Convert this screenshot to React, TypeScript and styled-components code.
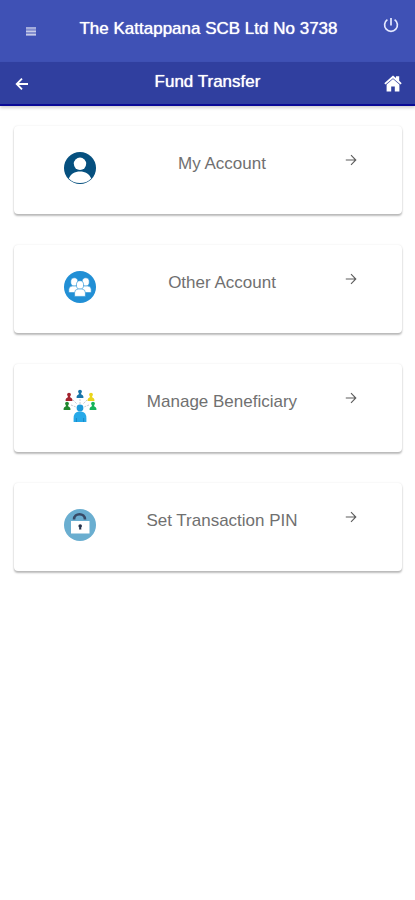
import React from "react";
import styled, { createGlobalStyle } from "styled-components";

const GlobalStyle = createGlobalStyle`
  * { box-sizing: border-box; }
  body {
    margin: 0;
    background: #fff;
    font-family: "Liberation Sans", Arial, Helvetica, sans-serif;
  }
`;

const Page = styled.div`
  min-height: 100vh;
`;

const Bar = styled.div`
  display: grid;
  grid-template-columns: 44px 1fr 44px;
  justify-items: center;
  color: #fff;
`;

const TopBar = styled(Bar)`
  height: 62px;
  padding: 0 2px 0 8px;
  grid-template-columns: 46px 1fr 50px;
  background: #3f51b5;
`;

const SubBar = styled(Bar)`
  height: 44px;
  background: #303f9f;
  border-bottom: 2px solid #0a0a96;
  box-shadow: 0 2px 3px rgba(0, 0, 0, 0.18);
`;

const Title = styled.h1`
  margin: 0;
  padding-top: 19px;
  font-size: 17px;
  line-height: 20px;
  font-weight: 400;
  white-space: nowrap;
  text-shadow: 0 0 1px #fff;
`;

const SubTitle = styled(Title).attrs({ as: "h2" })`
  padding-top: 10px;
`;

const IconButton = styled.button<{ $top: number; $end?: boolean }>`
  display: flex;
  align-self: start;
  justify-self: ${(p) => (p.$end ? "end" : "center")};
  margin: 0;
  padding: ${(p) => p.$top}px ${(p) => (p.$end ? 14 : 4)}px 4px 4px;
  border: 0;
  background: none;
  color: inherit;
  cursor: pointer;
`;

const CardList = styled.main`
  display: flex;
  flex-direction: column;
  gap: 31px;
  padding: 20px 13px 20px 14px;
`;

const Card = styled.button`
  display: grid;
  grid-template-columns: 33fr 38fr 26fr;
  justify-items: center;
  align-items: start;
  width: 100%;
  height: 88px;
  padding: 25px 0 0;
  border: 0;
  border-radius: 4px;
  background: #fff;
  color: #707070;
  font: inherit;
  cursor: pointer;
  box-shadow: 0 2px 2px rgba(0, 0, 0, 0.26), 0 0 2px rgba(0, 0, 0, 0.1);
`;

const CardLabel = styled.span`
  padding-top: 3px;
  font-size: 17px;
  line-height: 20px;
  white-space: nowrap;
`;

const ArrowSlot = styled.span`
  display: flex;
  padding: 3px 0 0 2px;
`;

const MenuIcon = () => (
  <svg width="12" height="12" viewBox="0 0 12 12" aria-hidden="true">
    <path d="M1 2h10v9H1z" fill="#fff" opacity=".35" />
    <path d="M1 3h10M1 6.3h10M1 9.6h10" stroke="#fff" strokeWidth="1.2" opacity=".55" />
  </svg>
);

const PowerIcon = () => (
  <svg width="16" height="16" viewBox="0 0 16 16" fill="none" stroke="#e4e8ff" strokeWidth="1.7" aria-hidden="true">
    <path d="M8 1v7.5M4.4 2.6a6.4 6.4 0 1 0 7.2 0" />
  </svg>
);

const ArrowLeft = () => (
  <svg width="14" height="14" viewBox="0 0 14 14" fill="none" stroke="#fff" strokeWidth="1.8" aria-hidden="true">
    <path d="M13 7H2M7 1.6 1.7 7 7 12.4" />
  </svg>
);

const ArrowRight = () => (
  <svg width="12" height="12" viewBox="0 0 12 12" fill="none" stroke="#5c5c5c" strokeWidth="1.1" aria-hidden="true">
    <path d="M.8 6h10M6 1.2 10.8 6 6 10.8" />
  </svg>
);

const HomeIcon = () => (
  <svg width="18" height="17" viewBox="0 0 18 17" fill="#fff" aria-hidden="true">
    <path d="M9 .4 12 3V1.200H15.200v4.600l2.500 2.500-1.200 1.300L9 3.200 1.500 9.600.3 8.300z" />
    <path d="m9 3.900 6.400 5.500v7h-4.600v-4.800H7.200v4.800H2.600v-7z" />
  </svg>
);

const AccountIcon = () => (
  <svg width="34" height="34" viewBox="0 0 34 34" aria-hidden="true">
    <circle cx="17" cy="17" r="16" fill="#06507f" />
    <circle cx="17" cy="12.800" r="6.200" fill="#fff" />
    <path d="M5.800 27.400C7.600 22.800 11.800 20.400 17 20.400s9.400 2.400 11.200 7C25.400 30.400 21.600 32 17 32S8.600 30.400 5.800 27.400z" fill="#fff" />
  </svg>
);

const GroupIcon = () => (
  <svg width="34" height="34" viewBox="0 0 34 34" aria-hidden="true">
    <circle cx="17" cy="17" r="16" fill="#218fd5" />
    <g fill="#fff" stroke="#218fd5" strokeWidth=".6">
      <ellipse cx="11.300" cy="12" rx="3.600" ry="4.200" />
      <ellipse cx="22.700" cy="12" rx="3.600" ry="4.200" />
      <path d="M5.800 22.600v-3.200q0-3 3.400-3.400h4.400q3 .4 3 3.400v3.200z" />
      <path d="M17.400 22.600v-3.200q0-3 3-3.400h4.400q3.400.4 3.400 3.400v3.200z" />
      <ellipse cx="17" cy="15" rx="3.600" ry="4.300" />
      <path d="M11.600 26.400v-3.600q0-3.400 3.400-3.800h4q3.400.4 3.400 3.800v3.600z" />
    </g>
  </svg>
);

const contacts = [
  { x: 4, y: 18, color: "#23882f" },
  { x: 6, y: 9, color: "#a3242f" },
  { x: 17, y: 6, color: "#1975a8" },
  { x: 28, y: 9, color: "#ead51b" },
  { x: 30, y: 18, color: "#17b45c" },
];

const BeneficiaryIcon = () => (
  <svg width="34" height="34" viewBox="0 0 34 34" aria-hidden="true">
    <path d="m8 16 5 2M10 11l4 4M17 10v5M24 11l-4 4M26 16l-5 2" stroke="#b9bfc6" strokeWidth=".8" strokeDasharray="2 1" />
    {contacts.map((c) => (
      <g key={c.color} fill={c.color} transform={`translate(${c.x} ${c.y})`}>
        <circle cy="-3.400" r="1.900" />
        <path d="M-3.400 3v-1.400Q-3 .2-1.400-.4L-1-2h2l.4 1.600Q3 .2 3.400 1.600V3z" />
      </g>
    ))}
    <circle cx="17" cy="19" r="3.400" fill="#1f9bda" />
    <path d="M10.600 33v-3.600q0-6 5-6.800h2.800q5 .8 5 6.800V33z" fill="#27a9e8" />
    <path d="M13.400 33v-4M20.600 33v-4" stroke="#1880bd" strokeWidth=".8" />
  </svg>
);

const LockIcon = () => (
  <svg width="34" height="34" viewBox="0 0 34 34" aria-hidden="true">
    <circle cx="17" cy="17" r="16" fill="#6aaed0" />
    <path d="M11 11.500C11 4.400 22 4.400 22 11.500" fill="none" stroke="#384a66" strokeWidth="2.600" />
    <path d="M8 13h18.500v12.500H8z" fill="#fff" />
    <circle cx="17.200" cy="18" r="1.800" fill="#26334d" />
    <path d="M16.500 18h1.400l.5 3.600h-2.400z" fill="#26334d" />
  </svg>
);

const items = [
  { label: "My Account", Icon: AccountIcon },
  { label: "Other Account", Icon: GroupIcon },
  { label: "Manage Beneficiary", Icon: BeneficiaryIcon },
  { label: "Set Transaction PIN", Icon: LockIcon },
];

export default function App() {
  return (
    <Page>
      <GlobalStyle />
      <header>
        <TopBar>
          <IconButton $top={25} aria-label="Menu"><MenuIcon /></IconButton>
          <Title>The Kattappana SCB Ltd No 3738</Title>
          <IconButton $top={17} $end aria-label="Log out"><PowerIcon /></IconButton>
        </TopBar>
        <SubBar>
          <IconButton $top={15} aria-label="Back"><ArrowLeft /></IconButton>
          <SubTitle>Fund Transfer</SubTitle>
          <IconButton $top={13} aria-label="Home"><HomeIcon /></IconButton>
        </SubBar>
      </header>
      <CardList>
        {items.map(({ label, Icon }) => (
          <Card key={label} type="button">
            <Icon />
            <CardLabel>{label}</CardLabel>
            <ArrowSlot><ArrowRight /></ArrowSlot>
          </Card>
        ))}
      </CardList>
    </Page>
  );
}
